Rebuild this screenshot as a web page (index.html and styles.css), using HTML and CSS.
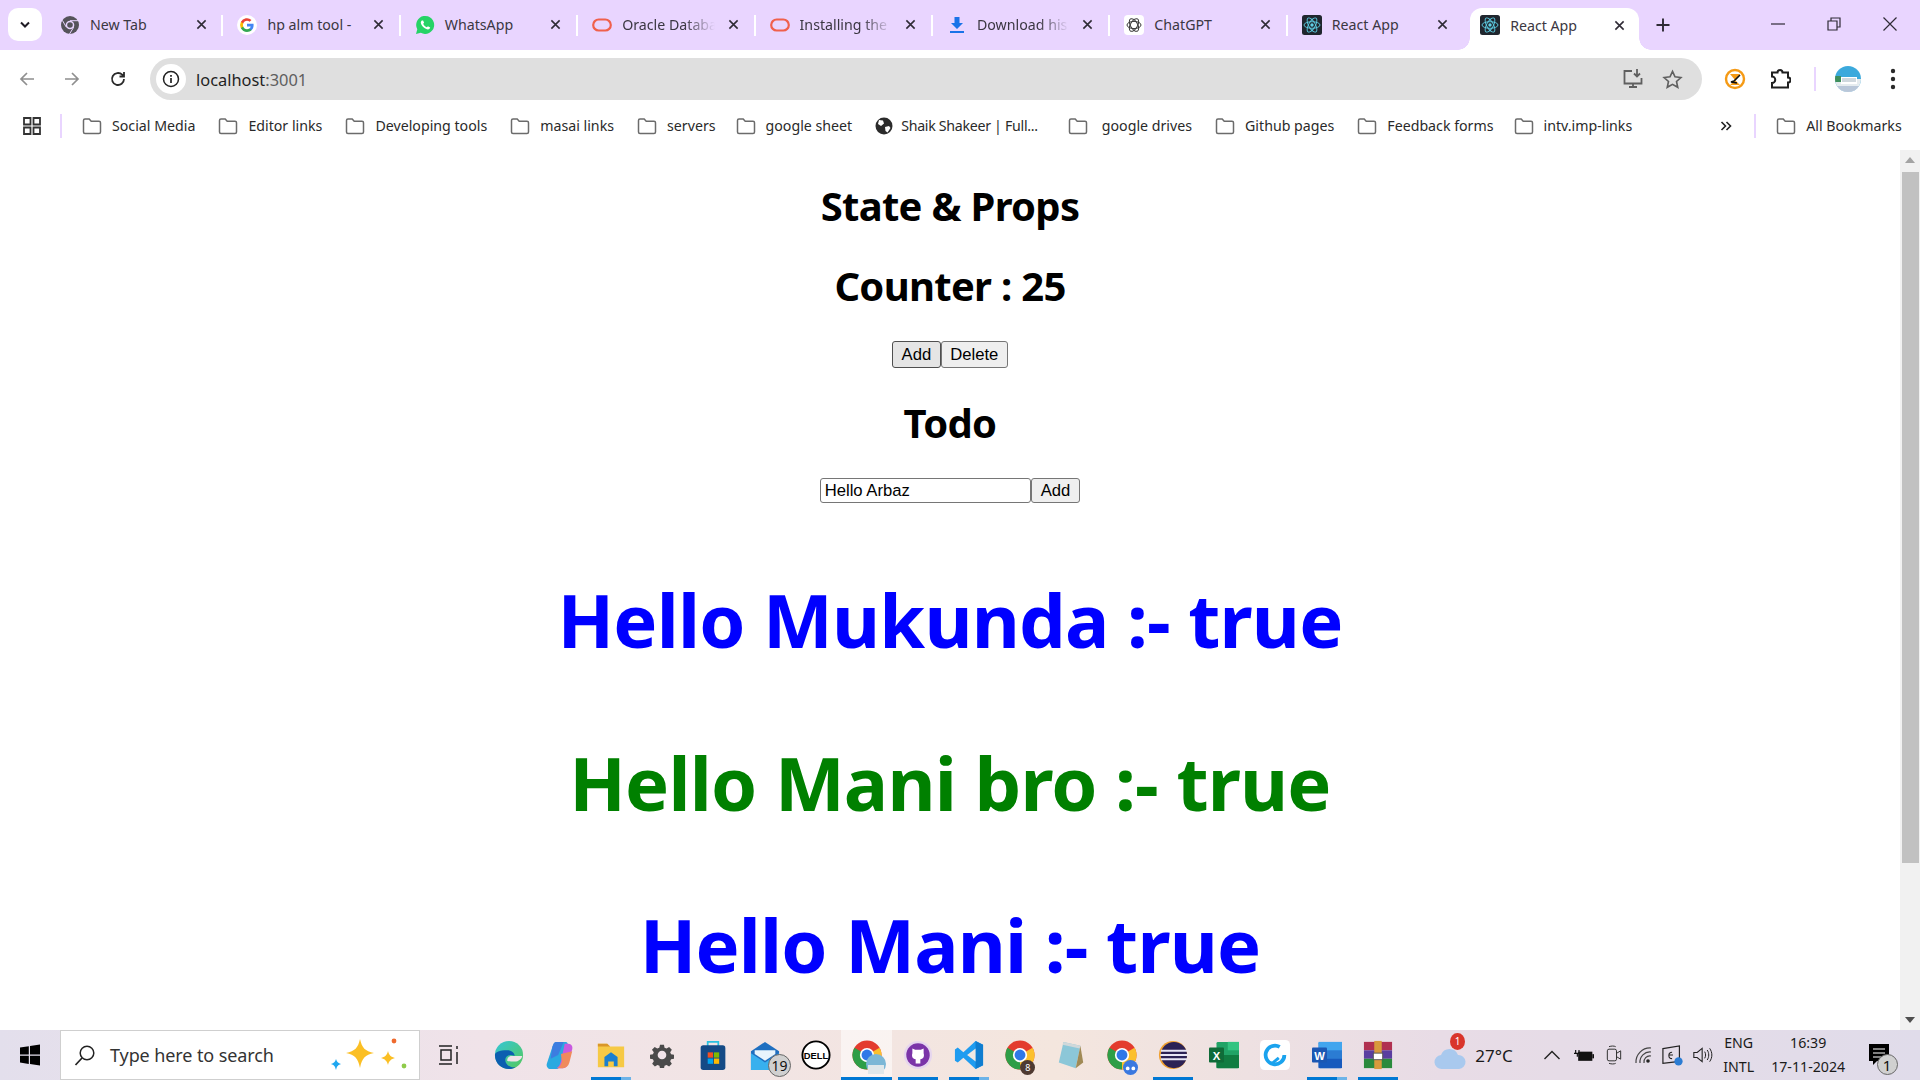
FILE: index.html
```html
<!DOCTYPE html>
<html lang="en">
<head>
<meta charset="utf-8">
<title>React App</title>
<link rel="stylesheet" href="styles.css">
</head>
<body>
<svg class="defs" aria-hidden="true">
  <symbol id="folder" viewBox="0 0 20 18"><path d="M1.5 3.5a1.5 1.5 0 0 1 1.5-1.5h4.2l2 2.2H17a1.5 1.5 0 0 1 1.5 1.5v9.3a1.5 1.5 0 0 1-1.5 1.5H3a1.5 1.5 0 0 1-1.5-1.5z" fill="none" stroke="#6b6b6b" stroke-width="1.5"/></symbol>
  <symbol id="close" viewBox="0 0 12 12"><path d="M1.5 1.5l9 9M10.5 1.5l-9 9" stroke="#2f2b36" stroke-width="1.7" fill="none"/></symbol>
  <symbol id="oracle" viewBox="0 0 20 20"><rect x="1.2" y="4.5" width="17.6" height="11" rx="5.5" fill="none" stroke="#f0604c" stroke-width="2.2"/></symbol>
  <symbol id="react" viewBox="0 0 20 20"><rect width="20" height="20" rx="2.5" fill="#20262e"/><g fill="none" stroke="#5fd0e6" stroke-width=".9"><ellipse cx="10" cy="10" rx="8" ry="3.3"/><ellipse cx="10" cy="10" rx="8" ry="3.3" transform="rotate(60 10 10)"/><ellipse cx="10" cy="10" rx="8" ry="3.3" transform="rotate(120 10 10)"/></g><circle cx="10" cy="10" r="1.7" fill="#5fd0e6"/></symbol>
  <symbol id="chrome" viewBox="0 0 32 32"><circle cx="16" cy="16" r="15.5" fill="#e33b2e"/><path d="M16 16L29.4 8.2A15.5 15.5 0 0 1 16 31.5z" fill="#fbc02d"/><path d="M16 16L16 31.5A15.5 15.5 0 0 1 2.6 8.2z" fill="#2e9e47"/><circle cx="16" cy="16" r="7.6" fill="#fff"/><circle cx="16" cy="16" r="5.8" fill="#2f78e8"/></symbol>
</svg>

<header class="tabstrip">
  <div class="tabmenu"><svg width="12" height="8" viewBox="0 0 12 8"><path d="M2 1.5l4 4 4-4" fill="none" stroke="#1f1b24" stroke-width="2"/></svg></div>
  <div class="tabs">
    <div class="tab">
      <svg class="fav" viewBox="0 0 20 20"><circle cx="10" cy="10" r="9" fill="#55535a"/><circle cx="10" cy="10" r="4.3" fill="#e9d5ff"/><circle cx="10" cy="10" r="2.8" fill="#55535a"/><path d="M10 5.7h8M6.3 12.2L2.4 5.4M13.7 12.2L9.5 19" stroke="#e9d5ff" stroke-width="1"/></svg>
      <span class="tab-title">New Tab</span>
      <svg class="x" viewBox="0 0 12 12"><use href="#close"/></svg>
    </div>
    <div class="tab">
      <svg class="fav" viewBox="0 0 20 20"><circle cx="10" cy="10" r="10" fill="#fff"/><path d="M16.6 10.2c0-.5 0-1-.1-1.4H10v2.7h3.7a3.2 3.2 0 0 1-1.4 2.1v1.7h2.2c1.3-1.2 2.1-3 2.1-5.1z" fill="#4285f4"/><path d="M10 17c1.9 0 3.4-.6 4.5-1.7l-2.2-1.7c-.6.4-1.4.7-2.3.7-1.8 0-3.3-1.2-3.8-2.8H3.9v1.8A7 7 0 0 0 10 17z" fill="#34a853"/><path d="M6.2 11.5a4 4 0 0 1 0-2.9V6.8H3.9a7 7 0 0 0 0 6.4z" fill="#fbbc05"/><path d="M10 5.8c1 0 1.9.3 2.6 1l1.9-1.9A7 7 0 0 0 3.9 6.8l2.3 1.8C6.700 7 8.200 5.800 10 5.800z" fill="#ea4335"/></svg>
      <span class="tab-title">hp alm tool -</span>
      <svg class="x" viewBox="0 0 12 12"><use href="#close"/></svg>
    </div>
    <div class="tab">
      <svg class="fav" viewBox="0 0 20 20"><path d="M1 19l1.300-4.700A9 9 0 1 1 5.800 17.800z" fill="#25d366"/><path d="M7 5.500c-.6.400-1.300 1.200-1.200 2.300.2 1.700 1.500 3.500 3 4.800 1.500 1.200 3.200 2 4.500 1.800 1-.1 1.800-1 1.900-1.800l-2.300-1.300-1 1c-1.500-.5-3-1.900-3.700-3.500l.9-1-1-2.300z" fill="#fff"/></svg>
      <span class="tab-title">WhatsApp</span>
      <svg class="x" viewBox="0 0 12 12"><use href="#close"/></svg>
    </div>
    <div class="tab">
      <svg class="fav" viewBox="0 0 20 20"><use href="#oracle"/></svg>
      <span class="tab-title fade">Oracle Databa</span>
      <svg class="x" viewBox="0 0 12 12"><use href="#close"/></svg>
    </div>
    <div class="tab">
      <svg class="fav" viewBox="0 0 20 20"><use href="#oracle"/></svg>
      <span class="tab-title fade">Installing the</span>
      <svg class="x" viewBox="0 0 12 12"><use href="#close"/></svg>
    </div>
    <div class="tab">
      <svg class="fav" viewBox="0 0 20 20"><path d="M7.500 2h5v6h3.500L10 14 4 8h3.500zM3 16h14v2H3z" fill="#1a73e8"/></svg>
      <span class="tab-title fade">Download his</span>
      <svg class="x" viewBox="0 0 12 12"><use href="#close"/></svg>
    </div>
    <div class="tab">
      <svg class="fav" viewBox="0 0 20 20"><rect width="20" height="20" rx="4" fill="#fff"/><g fill="none" stroke="#3a3a3a" stroke-width="1"><ellipse cx="10" cy="10" rx="7" ry="3.600"/><ellipse cx="10" cy="10" rx="7" ry="3.600" transform="rotate(60 10 10)"/><ellipse cx="10" cy="10" rx="7" ry="3.600" transform="rotate(120 10 10)"/></g></svg>
      <span class="tab-title">ChatGPT</span>
      <svg class="x" viewBox="0 0 12 12"><use href="#close"/></svg>
    </div>
    <div class="tab tab-last">
      <svg class="fav" viewBox="0 0 20 20"><use href="#react"/></svg>
      <span class="tab-title">React App</span>
      <svg class="x" viewBox="0 0 12 12"><use href="#close"/></svg>
    </div>
    <div class="tab active">
      <svg class="fav" viewBox="0 0 20 20"><use href="#react"/></svg>
      <span class="tab-title">React App</span>
      <svg class="x" viewBox="0 0 12 12"><use href="#close"/></svg>
    </div>
  </div>
  <svg class="newtab" viewBox="0 0 14 14"><path d="M7 .5v13M.5 7h13" stroke="#2f2b36" stroke-width="1.900"/></svg>
  <div class="winctl">
    <svg viewBox="0 0 14 14"><path d="M0 7h14" stroke="#2f2b36" stroke-width="1.200"/></svg>
    <svg viewBox="0 0 14 14"><path d="M1 4h9v9H1zM4 4V1h9v9h-3" fill="none" stroke="#2f2b36" stroke-width="1.200"/></svg>
    <svg viewBox="0 0 14 14"><path d="M.5.500l13 13M13.500.5l-13 13" stroke="#2f2b36" stroke-width="1.200"/></svg>
  </div>
</header>

<nav class="toolbar">
  <svg class="tool t-back" viewBox="0 0 18 18"><path d="M16 9H3M9 3L3 9l6 6" fill="none" stroke="#8f8f8f" stroke-width="1.700"/></svg>
  <svg class="tool t-fwd" viewBox="0 0 18 18"><path d="M2 9h13M9 3l6 6-6 6" fill="none" stroke="#8f8f8f" stroke-width="1.700"/></svg>
  <svg class="tool t-reload" viewBox="0 0 18 18"><path d="M15 9a6 6 0 1 1-1.800-4.300L15 6.500M15 2v4.500h-4.500" fill="none" stroke="#2a2a2a" stroke-width="1.800"/></svg>
  <div class="omnibox">
    <div class="info"><svg width="18" height="18" viewBox="0 0 18 18"><circle cx="9" cy="9" r="7.500" fill="none" stroke="#222" stroke-width="1.500"/><path d="M9 8v5M9 5v1.700" stroke="#222" stroke-width="1.700"/></svg></div>
    <div class="url">localhost<span class="port">:3001</span></div>
    <svg class="o-ic o-install" viewBox="0 0 22 22"><path d="M10 3H2.500v12.500h17V10M7 19h8M11 15.500V19" fill="none" stroke="#5f5f5f" stroke-width="1.800"/><path d="M15 1v7M12 5.500l3 3 3-3" fill="none" stroke="#5f5f5f" stroke-width="1.800"/></svg>
    <svg class="o-ic" viewBox="0 0 22 22"><path d="M11 2.500l2.600 5.700 6.200.7-4.600 4.200 1.300 6.100-5.500-3.100-5.500 3.100 1.300-6.100-4.600-4.200 6.200-.7z" fill="none" stroke="#5f5f5f" stroke-width="1.700"/></svg>
  </div>
  <div class="ext">
    <svg class="e-clock" viewBox="0 0 22 22"><circle cx="11" cy="11" r="9" fill="#fff" stroke="#f59a15" stroke-width="2.400"/><path d="M6 6h10l-5 6zM6 17l5-5 5 5z" fill="#f59a15"/><path d="M16 7l-6 6-3 1 6 1" fill="none" stroke="#111" stroke-width="1.600"/></svg>
    <svg class="e-puzzle" viewBox="0 0 22 22"><path d="M3 4.500h5.500a2.500 2.500 0 0 1 5 0H19v5a2.500 2.500 0 0 1 0 5v5H3v-4.500a2 2 0 0 0 0-6.500z" fill="none" stroke="#1f1f1f" stroke-width="2"/></svg>
    <i class="vsep"></i>
    <svg class="e-avatar" viewBox="0 0 26 26"><defs><clipPath id="av"><circle cx="13" cy="13" r="13"/></clipPath></defs><g clip-path="url(#av)"><rect width="26" height="26" fill="#3ba9dc"/><rect y="13" width="26" height="13" fill="#e6ecef"/><rect x="0" y="10" width="6" height="6" fill="#3d8f5c"/><path d="M6 11h16v7H6z" fill="#fff"/><path d="M7 13h14M7 15h14" stroke="#9fb1bd" stroke-width="1"/><rect y="20" width="26" height="6" fill="#b9c7d9"/></g></svg>
    <svg class="e-menu" viewBox="0 0 6 22"><circle cx="3" cy="3" r="2.200" fill="#2a2a2a"/><circle cx="3" cy="11" r="2.200" fill="#2a2a2a"/><circle cx="3" cy="19" r="2.200" fill="#2a2a2a"/></svg>
  </div>
</nav>

<nav class="bookmarks">
  <svg class="apps" viewBox="0 0 18 18"><path d="M1 1h6.500v6.500H1zM10.500 1H17v6.500h-6.500zM1 10.500h6.500V17H1zM10.500 10.500H17V17h-6.500z" fill="none" stroke="#333" stroke-width="1.800"/></svg>
  <i class="vsep bm-sep"></i>
  <a class="bm"><svg class="bm-f"><use href="#folder"/></svg>Social Media</a>
  <a class="bm"><svg class="bm-f"><use href="#folder"/></svg>Editor links</a>
  <a class="bm"><svg class="bm-f"><use href="#folder"/></svg>Developing tools</a>
  <a class="bm"><svg class="bm-f"><use href="#folder"/></svg>masai links</a>
  <a class="bm bm-tight"><svg class="bm-f"><use href="#folder"/></svg>servers</a>
  <a class="bm"><svg class="bm-f"><use href="#folder"/></svg>google sheet</a>
  <a class="bm bm-globe"><svg class="bm-g" viewBox="0 0 18 18"><circle cx="9" cy="9" r="8.500" fill="#2b2b2b"/><path d="M4 3l4 .5 1 3-3 2.500-3-2zM10 10l4-1 1.500 2-3 4.500-2-1.500z" fill="#fff"/></svg>Shaik Shakeer | Full...</a>
  <a class="bm bm-wide"><svg class="bm-f"><use href="#folder"/></svg>google drives</a>
  <a class="bm"><svg class="bm-f"><use href="#folder"/></svg>Github pages</a>
  <a class="bm bm-tight"><svg class="bm-f"><use href="#folder"/></svg>Feedback forms</a>
  <a class="bm"><svg class="bm-f"><use href="#folder"/></svg>intv.imp-links</a>
  <svg class="bm-more" viewBox="0 0 12 12"><path d="M1.500 2l4 4-4 4M6.500 2l4 4-4 4" fill="none" stroke="#222" stroke-width="1.600"/></svg>
  <i class="vsep bm-sep2"></i>
  <a class="bm bm-all"><svg class="bm-f"><use href="#folder"/></svg>All Bookmarks</a>
</nav>

<div class="viewport">
  <main class="page">
    <h1 class="title">State &amp; Props</h1>
    <h1 class="title">Counter : 25</h1>
    <div class="row counter-row"><button class="btn btn-hover">Add</button><button class="btn">Delete</button></div>
    <h1 class="title todo">Todo</h1>
    <div class="row todo-row"><input class="field" value="Hello Arbaz"><button class="btn">Add</button></div>
    <h1 class="big first blue">Hello Mukunda :- true</h1>
    <h1 class="big green">Hello Mani bro :- true</h1>
    <h1 class="big blue">Hello Mani :- true</h1>
  </main>
  <aside class="scrollbar">
    <i class="arrow up"></i>
    <i class="thumb"></i>
    <i class="arrow down"></i>
  </aside>
</div>

<footer class="taskbar">
  <div class="start"><svg width="22" height="22" viewBox="0 0 22 22"><path d="M1 3.500l8.800-1.300v8.300H1zM11 2l10-1.500v10H11zM1 11.700h8.800v8.200L1 18.600zM11 11.700h10v9.800l-10-1.500z" fill="#000"/></svg></div>
  <div class="search">
    <svg class="s-glass" viewBox="0 0 22 22"><circle cx="13" cy="9" r="6.800" fill="none" stroke="#222" stroke-width="1.500"/><path d="M8 14l-6.500 7" stroke="#222" stroke-width="1.700"/></svg>
    <span class="s-text">Type here to search</span>
    <svg class="s-spark" viewBox="0 0 78 36"><path d="M30 2c2 9 5 12 14 14-9 2-12 5-14 15-2-10-5-13-14-15 9-2 12-5 14-14z" fill="#fbbf24"/><path d="M58 14c1 4 3 6 7 7-4 1-6 3-7 7-1-4-3-6-7-7 4-1 6-3 7-7z" fill="#fbbf24"/><circle cx="64" cy="4" r="2.400" fill="#ef6a2e"/><circle cx="74" cy="29" r="2.400" fill="#8fcb4a"/><path d="M6 22c1 3 2 4 5 5-3 1-4 2-5 6-1-4-2-5-5-6 3-1 4-2 5-5z" fill="#1ea7f0"/></svg>
  </div>
  <div class="slot slot-tv"><svg class="ic" viewBox="0 0 24 24"><path d="M2 3h13M2 21h13M4 7h10v10H4zM20 3v3M20 9v12" fill="none" stroke="#222" stroke-width="1.500"/></svg></div>
  <div class="slot"><svg class="ic" viewBox="0 0 32 32"><defs><linearGradient id="ed1" x1="0" y1="0" x2="1" y2="1"><stop offset="0" stop-color="#34c6d8"/><stop offset="1" stop-color="#55c95a"/></linearGradient></defs><circle cx="16" cy="16" r="15" fill="url(#ed1)"/><path d="M1 16c0 9 7 15 15 15 3 0 5-1 7-2-6 1-11-3-11-8 0-3 3-5 6-5 2 0 4 1 4 1 0-3-3-6-8-6-8 0-13 2-13 5z" fill="#0c5fb0"/><path d="M14 22c0-3 2-5 5-5 4 0 7 0 11 0 0 3-4 6-8 6-3 0-6 0-8-1z" fill="#f0e3e9"/></svg></div>
  <div class="slot"><svg class="ic" viewBox="0 0 32 32"><path d="M12 2h10c2 0 3 2 2 4l-8 22c-1 2-2 3-4 3H6c-3 0-5-3-4-6l6-18c1-3 2-5 4-5z" fill="#2aa9e0"/><path d="M12 2h8l-6 14-8 4 2-13c1-3 2-5 4-5z" fill="#3c7de0"/><path d="M21 4h4c3 0 5 3 4 6l-5 16c-1 3-3 4-5 4h-7c3-1 4-4 5-7z" fill="#c85ae0"/><path d="M17 15l12-3-3 12c-1 4-4 6-7 6h-6c3-1 4-4 5-7z" fill="#f08a5c"/></svg></div>
  <div class="slot run run-multi"><svg class="ic" viewBox="0 0 32 32"><path d="M2 4h10l3 3h15v22H2z" fill="#f6c945"/><path d="M2 4h10l3 3H2z" fill="#d9962a"/><path d="M9 18l7-5 7 5v10H19v-5h-6v5H9z" fill="#1a7fd0"/></svg></div>
  <div class="slot"><svg class="ic ic-26" viewBox="0 0 24 24"><path d="M10 1.500h4l.6 3 2.100.9 2.600-1.700 2.800 2.800-1.700 2.600.9 2.100 3 .6v4l-3 .6-.9 2.100 1.700 2.600-2.800 2.800-2.600-1.700-2.100.9-.6 3h-4l-.6-3-2.100-.9-2.600 1.700-2.800-2.800 1.700-2.600-.9-2.100-3-.6v-4l3-.6.9-2.100L1.700 6.500l2.800-2.800 2.600 1.700 2.100-.9z" transform="translate(1.200 1.200) scale(.9)" fill="#4a4a4a"/><circle cx="12" cy="12" r="4" fill="#f0e3e9"/></svg></div>
  <div class="slot"><svg class="ic" viewBox="0 0 32 34"><path d="M10 7V2h12v5" fill="none" stroke="#2ac0e0" stroke-width="2"/><rect x="2" y="6" width="28" height="28" rx="3" fill="#144a86"/><path d="M10 14h6v6h-6z" fill="#f25022"/><path d="M17 14h6v6h-6z" fill="#7fba00"/><path d="M10 21h6v6h-6z" fill="#00a4ef"/><path d="M17 21h6v6h-6z" fill="#ffb900"/></svg></div>
  <div class="slot slot-mail"><svg class="ic" viewBox="0 0 32 32"><path d="M1 12L16 2l15 10v20H1z" fill="#1f6fc0"/><path d="M5 15V11h22v4l-11 7z" fill="#e8f4fc"/><path d="M1 14l15 10 15-10v18H1z" fill="#38b0ee"/></svg><b class="badge b-19">19</b></div>
  <div class="slot"><svg class="ic" viewBox="0 0 32 32"><circle cx="16" cy="16" r="14.500" fill="#fff" stroke="#000" stroke-width="2"/><text x="16" y="20" text-anchor="middle" class="dell">DELL</text></svg></div>
  <div class="slot slot-active run"><svg class="ic"><use href="#chrome"/></svg><svg class="over" viewBox="0 0 20 20"><circle cx="10" cy="10" r="10" fill="#7cb7d6"/><path d="M2 11h16v9H2z" fill="#dfe7ea"/></svg></div>
  <div class="slot run"><svg class="ic" viewBox="0 0 32 32"><circle cx="16" cy="16" r="15" fill="#e6d6ee"/><circle cx="16" cy="16" r="12.500" fill="#7b34a8"/><path d="M10 9l3 1.500h6L22 9v5c1 3 0 6-3.500 6.500V25h-5v-4.500C10 20 9 17 10 14z" fill="#fff"/></svg></div>
  <div class="slot run run-multi"><svg class="ic" viewBox="0 0 32 32"><path d="M23 1l8 4v22l-8 4-13-12-6 5-3-2V10l3-2 6 5z" fill="#1f9cf0"/><path d="M23 1v30l8-4V5z" fill="#0f7dd0"/><path d="M23 9l-9 7 9 7z" fill="#f0e8e2"/></svg></div>
  <div class="slot"><svg class="ic"><use href="#chrome"/></svg><b class="badge b-8">8</b></div>
  <div class="slot"><svg class="ic" viewBox="0 0 32 32"><path d="M8 2l18 4-5 24-18-6z" fill="#8cc7d8"/><path d="M8 2l18 4-.7 3L7 5z" fill="#d0d8da"/><path d="M26 6l3 18-8 6z" fill="#a08a55"/></svg></div>
  <div class="slot"><svg class="ic"><use href="#chrome"/></svg><svg class="over over-sm" viewBox="0 0 16 16"><circle cx="8" cy="8" r="8" fill="#3a78e0"/><circle cx="5" cy="9" r="2" fill="#fff"/><circle cx="11" cy="9" r="2" fill="#fff"/></svg></div>
  <div class="slot run"><svg class="ic" viewBox="0 0 32 32"><circle cx="16" cy="16" r="15" fill="#f0a030"/><circle cx="17" cy="16" r="14" fill="#2c2255"/><path d="M3 11.500h28M2.500 16h29M3 20.500h28" stroke="#e8e6f5" stroke-width="2"/></svg></div>
  <div class="slot"><svg class="ic" viewBox="0 0 32 32"><rect x="8" y="2" width="24" height="28" rx="1.500" fill="#21a366"/><path d="M20 2h12v9H20z" fill="#33c481"/><path d="M8 16h24v14H8z" fill="#107c41"/><rect y="8" width="16" height="16" rx="1" fill="#0f6b38"/><text x="8" y="21" text-anchor="middle" class="xl">X</text></svg></div>
  <div class="slot"><svg class="ic" viewBox="0 0 32 32"><rect width="32" height="32" rx="5" fill="#fff"/><path d="M26 16a10 10 0 1 1-5-8.700" fill="none" stroke="#1aa3ee" stroke-width="4"/><path d="M20 19l-7 6" stroke="#1aa3ee" stroke-width="3"/></svg></div>
  <div class="slot run run-multi"><svg class="ic" viewBox="0 0 32 32"><rect x="7" y="2" width="25" height="28" rx="1.500" fill="#2b7cd3"/><path d="M7 2h25v9H7z" fill="#41a5ee"/><path d="M7 20h25v10H7z" fill="#185abd"/><rect y="8" width="16" height="16" rx="1" fill="#1b57b3"/><text x="8" y="21" text-anchor="middle" class="xl">W</text></svg></div>
  <div class="slot run"><svg class="ic" viewBox="0 0 32 32"><rect x="1" y="2" width="30" height="9" fill="#b03050"/><rect x="1" y="11" width="30" height="9" fill="#5a3ea0"/><rect x="1" y="20" width="30" height="10" fill="#2a8a3c"/><rect x="12" y="1" width="8" height="30" fill="#d89a3c"/><rect x="11" y="14" width="10" height="7" fill="#fff" stroke="#555"/></svg></div>
  <div class="weather">
    <span class="cloud"><svg viewBox="0 0 32 24" width="32" height="24"><path d="M8 23a7 7 0 0 1-1-14 9 9 0 0 1 17 0 6 6 0 0 1 1 14z" fill="#a9c9ee"/></svg><b class="w-badge">1</b></span>
    <span class="w-text">27°C</span>
  </div>
  <div class="tray">
    <svg class="tr-chev" viewBox="0 0 18 10"><path d="M1.500 9L9 1.500 16.500 9" fill="none" stroke="#222" stroke-width="1.400"/></svg>
    <svg class="tr" viewBox="0 0 24 20"><path d="M6 4v4M2 4v4M0 8h8M4 8v4" stroke="#111" stroke-width="1.400" fill="none"/><rect x="5" y="6" width="17" height="11" fill="#111"/><rect x="22" y="9" width="2" height="5" fill="#111"/></svg>
    <svg class="tr" viewBox="0 0 20 24"><rect x="2" y="5" width="11" height="14" rx="2" fill="none" stroke="#333" stroke-width="1.200"/><path d="M13 10l5-3v10l-5-3M4 2c3-1 6-1 8 0M4 22c3 1 6 1 8 0" fill="none" stroke="#333" stroke-width="1.200"/></svg>
    <svg class="tr" viewBox="0 0 20 20"><path d="M2 18A14 14 0 0 1 17 3M6 18A10 10 0 0 1 17 7M10 18a6 6 0 0 1 7-7" fill="none" stroke="#444" stroke-width="1.200"/><circle cx="14" cy="16" r="1.800" fill="#222"/></svg>
    <svg class="tr tr-mon" viewBox="0 0 24 24"><path d="M1 5l18-3v17l-18 2z" fill="none" stroke="#222" stroke-width="1.300"/><path d="M11 9a3.500 3.500 0 1 0 0 7M8 12h4" stroke="#222" stroke-width="1.200" fill="none"/><circle cx="18" cy="19" r="4.500" fill="#2b7cd3"/></svg>
    <svg class="tr" viewBox="0 0 24 20"><path d="M1 7h4l6-5v16l-6-5H1z" fill="none" stroke="#222" stroke-width="1.300"/><path d="M14 6c1.500 2.500 1.500 5.500 0 8M17 4c2.500 3.500 2.500 8.500 0 12M20 2c3.500 5 3.500 11 0 16" fill="none" stroke="#222" stroke-width="1.200"/></svg>
  </div>
  <div class="lang"><span>ENG</span><span>INTL</span></div>
  <div class="clock"><span>16:39</span><span>17-11-2024</span></div>
  <div class="notify"><svg width="22" height="24" viewBox="0 0 22 24"><path d="M1 1h20v17H9l-4 4v-4H1z" fill="#000"/><path d="M5 6h12M5 10h12M5 14h8" stroke="#fff" stroke-width="1.200"/></svg><b class="badge b-1">1</b></div>
</footer>
</body>
</html>
```

FILE: styles.css
```css
* { box-sizing: border-box; }
html, body { margin: 0; height: 100%; }
body {
  display: flex;
  flex-direction: column;
  height: 100vh;
  overflow: hidden;
  background: #fff;
  font-family: "Noto Sans", "Open Sans", sans-serif;
  color: #000;
}
.defs { display: none; }
svg { display: block; flex: none; }

/* tab strip */
.tabstrip {
  height: 50px;
  flex: none;
  display: flex;
  background: #e9d5ff;
}
.tabmenu {
  width: 34px;
  height: 33px;
  margin: 8px 4px 0 8px;
  border-radius: 10px;
  background: #fff;
  display: flex;
  align-items: center;
  justify-content: center;
}
.tabs { display: flex; width: 1592px; flex: none; }
.tab {
  position: relative;
  width: 177.4px;
  flex: none;
  height: 50px;
  padding: 0 0 1px 14px;
  display: flex;
  align-items: center;
}
.tab::after {
  content: "";
  position: absolute;
  right: 0;
  top: 15px;
  width: 2px;
  height: 21px;
  background: #fff;
}
.tab-last::after { background: none; }
.fav { width: 20px; height: 20px; }
.tab-title {
  margin-left: 10px;
  width: 100.5px;
  flex: none;
  white-space: nowrap;
  font-size: 14.2px;
  color: #3b3742;
}
.fade {
  -webkit-mask-image: linear-gradient(90deg, #000 62%, transparent 92%);
  mask-image: linear-gradient(90deg, #000 62%, transparent 92%);
}
.x { width: 11px; height: 11px; margin-left: 5px; }
.active {
  width: 169px;
  margin-left: 5px;
  height: 42px;
  margin-top: 8px;
  background: #fff;
  border-radius: 12px 12px 0 0;
  padding: 0 0 8px 10px;
}
.active .x { margin-left: 3px; }
.active::before {
  content: "";
  position: absolute;
  left: -12px;
  bottom: 0;
  width: 12px;
  height: 12px;
  background: radial-gradient(circle at 0 0, transparent 11.5px, #fff 12px);
}
.active::after {
  right: -12px;
  top: auto;
  bottom: 0;
  width: 12px;
  height: 12px;
  background: radial-gradient(circle at 100% 0, transparent 11.5px, #fff 12px);
}
.newtab { width: 14px; height: 14px; margin: 18px 0 0 18px; }
.winctl { display: flex; margin-left: 101px; gap: 42px; padding-top: 17px; }
.winctl svg { width: 14px; height: 14px; }

/* toolbar */
.toolbar {
  height: 57px;
  flex: none;
  display: flex;
  align-items: flex-start;
  background: #fff;
  border-radius: 12px 12px 0 0;
  padding-top: 8px;
  padding-left: 18px;
}
.tool { width: 18px; height: 18px; margin-top: 12px; }
.t-fwd { margin-left: 27px; }
.t-reload { margin-left: 28px; }
.omnibox {
  width: 1552px;
  height: 42px;
  margin-left: 23px;
  border-radius: 21px;
  background: #dfdfdf;
  display: flex;
  align-items: center;
  padding: 0 19px 0 6px;
  flex: none;
}
.info {
  width: 30px;
  height: 30px;
  border-radius: 50%;
  background: #fff;
  display: flex;
  align-items: center;
  justify-content: center;
}
.url { margin-left: 10px; flex: 1; font-size: 16.4px; color: #1f1f1f; }
.port { color: #5e5e5e; }
.o-ic { width: 21px; height: 21px; }
.o-install { margin-right: 18px; width: 22px; height: 22px; }
.ext { display: flex; align-items: center; height: 42px; }
.e-clock { width: 22px; height: 22px; margin-left: 22px; }
.e-puzzle { width: 22px; height: 22px; margin-left: 23px; }
.vsep { display: block; width: 2px; height: 24px; background: #e9d5ff; flex: none; }
.ext .vsep { margin-left: 23px; }
.e-avatar { width: 26px; height: 26px; margin-left: 19px; }
.e-menu { width: 6px; height: 22px; margin-left: 29px; }

/* bookmarks */
.bookmarks {
  height: 43px;
  flex: none;
  display: flex;
  align-items: center;
  padding: 0 0 6px 23px;
  font-size: 14.2px;
  color: #222;
  white-space: nowrap;
}
.apps { width: 18px; height: 18px; }
.bm-sep { margin: 0 20px 0 19px; }
.bm { display: flex; align-items: center; margin-right: 23px; color: #2a2a2a; }
.bm-tight { margin-right: 20px; }
.bm-f { width: 20px; height: 18px; margin-right: 10px; }
.bm-g { width: 18px; height: 18px; margin-right: 8px; }
.bm-globe { margin-right: 30px; letter-spacing: -.3px; }
.bm-wide .bm-f { margin-right: 14px; }
.bm-more { width: 12px; height: 12px; margin-left: 65px; }
.bm-sep2 { margin: 0 20px 0 22px; }
.bm-all { margin-right: 0; }

/* page */
.viewport { flex: 1; display: flex; min-height: 0; }
.page { flex: 1; min-width: 0; overflow: hidden; text-align: center; padding-top: 29px; }
.title {
  margin: 0 0 27px;
  font-size: 40px;
  line-height: 53px;
  font-weight: 700;
  letter-spacing: -.7px;
}
.row { display: flex; justify-content: center; }
.counter-row { height: 27px; margin-top: 29px; }
.todo { margin-top: 28px; margin-bottom: 29px; }
.todo-row { height: 25px; }
.btn {
  font: 16.67px "Liberation Sans", Arial, sans-serif;
  color: #000;
  background: #efefef;
  border: 1.25px solid #767676;
  border-radius: 3px;
  padding: 0 8.5px;
}
.btn-hover { background: #e5e5e5; border-color: #4f4f4f; }
.field {
  width: 211px;
  font: 16.67px "Liberation Sans", Arial, sans-serif;
  color: #000;
  border: 1.25px solid #767676;
  border-radius: 3px;
  padding: 0 3.5px;
  background: #fff;
}
.big {
  margin: 0 0 54px;
  font-size: 74px;
  line-height: 108.5px;
  font-weight: 700;
  letter-spacing: -.8px;
}
.first { margin-top: 63px; }
.blue { color: #00f; }
.green { color: #008000; }
.scrollbar {
  width: 20px;
  flex: none;
  background: #f1f1f1;
  display: flex;
  flex-direction: column;
  align-items: center;
  padding: 7px 0;
}
.arrow { width: 0; height: 0; border-left: 5px solid transparent; border-right: 5px solid transparent; }
.up { border-bottom: 6px solid #a3a3a3; }
.down { border-top: 6px solid #505050; margin-top: auto; }
.thumb { display: block; width: 17px; height: 691px; margin-top: 9px; background: #c1c1c1; }

/* taskbar */
.taskbar {
  height: 50px;
  flex: none;
  display: flex;
  align-items: center;
  background: linear-gradient(90deg, #e3dfec 0, #f0e3e9 25%, #f4e6de 55%, #e8dce6 75%, #e0dcea 100%);
  color: #1a1a1a;
}
.start { width: 60px; display: flex; justify-content: center; }
.search {
  width: 360px;
  height: 50px;
  background: #fff;
  border: 1px solid #cfcfcf;
  display: flex;
  align-items: center;
  padding-left: 13px;
}
.s-glass { width: 22px; height: 22px; }
.s-text { margin-left: 14px; font-size: 18px; color: #333; white-space: nowrap; letter-spacing: -.1px; }
.s-spark { width: 78px; height: 36px; margin-left: auto; margin-right: 11px; }
.slot {
  position: relative;
  width: 51.1px;
  height: 50px;
  flex: none;
  display: flex;
  align-items: center;
  justify-content: center;
}
.slot-tv { width: 63.5px; }
.slot-tv .ic { width: 24px; height: 24px; margin-right: 5px; }
.ic { width: 30px; height: 30px; }
.ic-26 { width: 26px; height: 26px; }
.run::after {
  content: "";
  position: absolute;
  left: 5.5px;
  right: 5.5px;
  bottom: 0;
  height: 3px;
  background: #0078d4;
}
.run-multi::after {
  background: linear-gradient(90deg, #0078d4 75%, #6db3e8 75%);
}
.slot-active { background: rgba(255, 255, 255, .55); }
.slot-active::after { left: 0; right: 0; }
.over { position: absolute; left: 25px; top: 23px; width: 20px; height: 22px; }
.over-sm { left: 26px; top: 30px; width: 15px; height: 15px; }
.badge {
  position: absolute;
  display: flex;
  align-items: center;
  justify-content: center;
  border-radius: 50%;
  font-weight: 400;
  font-size: 13px;
}
.b-19 { left: 29px; top: 24px; width: 23px; height: 23px; background: #d0d0d0; border: 1px solid #666; color: #111; font-size: 14px; }
.b-8 { left: 26px; top: 30px; width: 15px; height: 15px; background: #4e3a32; color: #fff; font-size: 9px; }
.b-1 { left: 9px; top: 11px; width: 21px; height: 21px; background: #d0d0d0; border: 1px solid #666; color: #111; font-size: 15px; }
.dell { font: 700 10px "Liberation Sans", sans-serif; fill: #000; }
.xl { font: 700 12px "Liberation Sans", sans-serif; fill: #fff; }
.weather { display: flex; align-items: center; margin-left: 31px; }
.cloud { position: relative; width: 32px; height: 24px; margin-top: 6px; }
.w-badge {
  position: absolute;
  left: 16px;
  top: -13px;
  width: 15px;
  height: 17px;
  border-radius: 50%;
  background: #d9342b;
  color: #fff;
  font-size: 10px;
  font-weight: 400;
  text-align: center;
  line-height: 17px;
}
.w-text { margin-left: 9px; font-size: 17px; white-space: nowrap; }
.tray { display: flex; align-items: center; margin-left: 30px; gap: 10px; }
.tr { width: 20px; height: 20px; }
.tr-chev { width: 18px; height: 10px; margin-right: 3px; }
.tr-mon { width: 22px; height: 22px; margin-left: -2px; margin-right: -1px; }
.lang, .clock {
  display: flex;
  flex-direction: column;
  align-items: center;
  font-size: 14.2px;
  line-height: 24px;
  white-space: nowrap;
}
.lang { margin-left: 8px; width: 36px; }
.clock { margin-left: 13.5px; width: 76px; }
.notify { position: relative; margin-left: 21.5px; margin-top: 0; width: 22px; height: 24px; }
```
